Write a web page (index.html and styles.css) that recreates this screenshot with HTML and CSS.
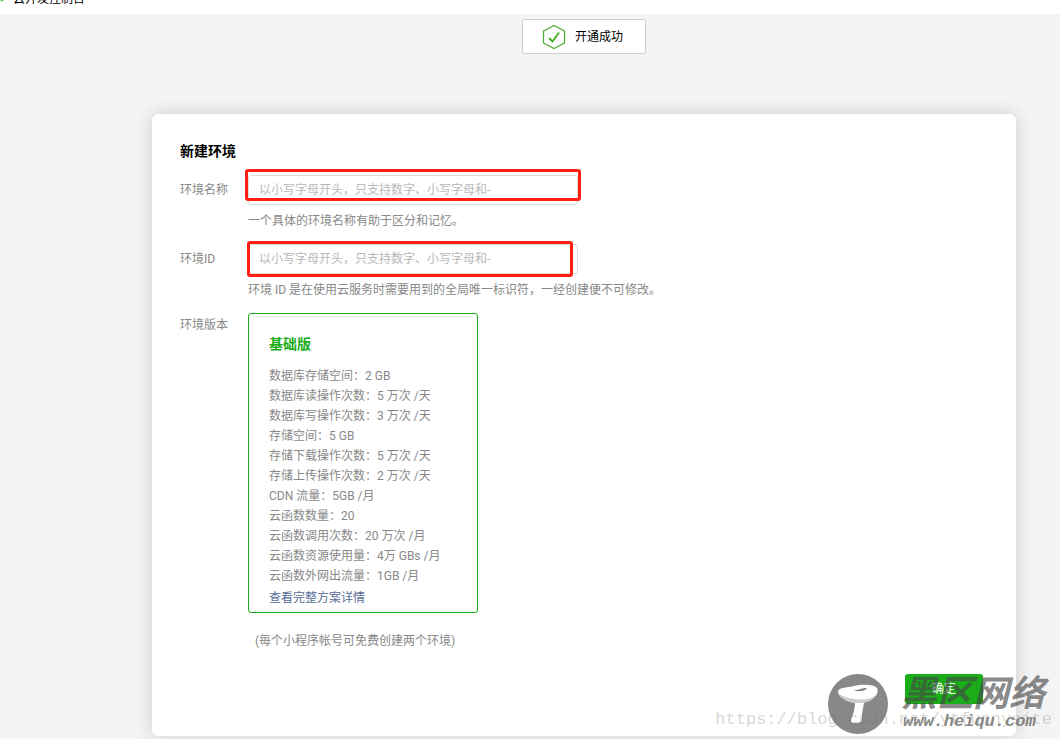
FILE: index.html
```
<!DOCTYPE html>
<html lang="zh-CN">
  <head>
    <meta charset="UTF-8" />
    <meta name="viewport" content="width=device-width, initial-scale=1.0" />
    <title>云开发控制台</title>
    <link rel="stylesheet" href="styles.css">
  </head>
  <body>
    <header class="topbar">
      <svg class="topbar-logo" width="5" height="12" viewBox="0 0 5 12">
        <path d="M1 4L4 2" stroke="#5fc45f" stroke-width="2" fill="none" />
      </svg>
      <span class="topbar-title">云开发控制台</span>
    </header>

    <main class="main">
      <div class="toast">
        <svg width="24" height="26" viewBox="0 0 24 26" fill="none" stroke="#4dab32">
          <path d="M12 1.5L22.5 7V19L12 24.5L1.5 19V7Z" stroke-width="1.3" stroke-linejoin="round" />
          <path d="M7 14L10.5 17.5L17 8.5" stroke-width="2" />
        </svg>
        <span>开通成功</span>
      </div>

      <form class="card">
        <h1 class="card-title">新建环境</h1>

        <div class="row">
          <label class="label" for="envName">环境名称</label>
          <div class="field">
            <input class="input" type="text" id="envName" placeholder="以小写字母开头，只支持数字、小写字母和-" />
            <span class="mark mark-name"></span>
            <p class="hint">一个具体的环境名称有助于区分和记忆。</p>
          </div>
        </div>

        <div class="row">
          <label class="label" for="envId">环境ID</label>
          <div class="field">
            <input class="input" type="text" id="envId" placeholder="以小写字母开头，只支持数字、小写字母和-" />
            <span class="mark mark-id"></span>
            <p class="hint">环境 ID 是在使用云服务时需要用到的全局唯一标识符，一经创建便不可修改。</p>
          </div>
        </div>

        <div class="row">
          <span class="label label-plan">环境版本</span>
          <div class="field">
            <section class="plan">
              <h2 class="plan-title">基础版</h2>
              <ul class="plan-list">
                <li>数据库存储空间：2 GB</li>
                <li>数据库读操作次数：5 万次 /天</li>
                <li>数据库写操作次数：3 万次 /天</li>
                <li>存储空间：5 GB</li>
                <li>存储下载操作次数：5 万次 /天</li>
                <li>存储上传操作次数：2 万次 /天</li>
                <li>CDN 流量：5GB /月</li>
                <li>云函数数量：20</li>
                <li>云函数调用次数：20 万次 /月</li>
                <li>云函数资源使用量：4万 GBs /月</li>
                <li>云函数外网出流量：1GB /月</li>
              </ul>
              <a class="plan-link" href="#">查看完整方案详情</a>
            </section>
            <p class="note">(每个小程序帐号可免费创建两个环境)</p>
          </div>
        </div>

        <div class="actions">
          <button class="btn" type="submit">确定</button>
        </div>
      </form>
    </main>

    <div class="site-mark">
      <svg width="60" height="60" viewBox="0 0 60 60">
        <circle cx="30" cy="30" r="30" fill="#888" />
        <path d="M27 26C27 34 26 38 24 43C22 48 23 49 28 49C33 49 34 47 34 42C34 37 36 33 36 26Z" fill="#fff" />
        <path d="M10 18C10 13 18 14 26 12C34 10 46 10 49 14C52 20 45 27 34 29C24 30 11 25 10 18Z" fill="#fff" />
        <path d="M11 20C18 25 39 29 48 21C44 28 36 29 30 29C22 29 14 26 11 20Z" fill="#ccc" />
        <path d="M25 16C30 17 32 14 39 14C37 18 29 18 25 16Z" fill="#888" />
      </svg>
      <div class="site-text">
        <div class="site-name">黑区网络</div>
        <div class="site-url">www.heiqu.com</div>
      </div>
    </div>
    <div class="blog-mark">https://blog.csdn.net/ytfunnysite</div>
  </body>
</html>
```
FILE: styles.css
```
* {
  box-sizing: border-box;
}

body {
  position: relative;
  margin: 0;
  background-color: #f4f4f4;
  color: #888;
  font-family: Roboto, "Noto Sans CJK SC", sans-serif;
  font-size: 12px;
  line-height: 20px;
}

h1,
h2,
p,
ul {
  margin: 0;
  padding: 0;
}

/* top bar, scrolled almost out of view */
.topbar {
  display: flex;
  align-items: flex-end;
  gap: 8px;
  height: 14px;
  padding-bottom: 5px;
  background: #fff;
  color: #000;
  overflow: hidden;
}

.main {
  padding: 5px 44px 3px 152px;
}

.toast {
  display: flex;
  align-items: center;
  gap: 9px;
  width: fit-content;
  height: 35px;
  margin: 0 auto 60px;
  padding: 0 22px 0 19px;
  border: 1px solid #d0d0d0;
  border-radius: 2px;
  background: #fff;
  color: #000;
}

.card {
  padding: 27px 33px 32px 28px;
  border-radius: 6px;
  background: #fff;
  box-shadow: 0 0 18px rgba(0, 0, 0, 0.16);
}

.card-title {
  margin-bottom: 14px;
  color: #000;
  font-size: 14px;
  line-height: 20px;
}

.row {
  display: flex;
  margin-bottom: 13px;
}

.label {
  width: 68px;
  flex-shrink: 0;
  line-height: 30px;
}

.label-plan {
  line-height: 24px;
}

.field {
  position: relative;
}

.input {
  display: block;
  width: 330px;
  height: 30px;
  padding: 0 10px;
  border: 1px solid #ddd;
  border-radius: 3px;
  outline: none;
  background: #fff;
  color: #333;
  font: inherit;
}

.input::placeholder {
  color: #b8b8b8;
}

.hint {
  margin-top: 6px;
}

/* red boxes drawn over the inputs */
.mark {
  position: absolute;
  border: 3px solid #ff1f12;
  border-radius: 3px;
  pointer-events: none;
}

.mark-name {
  top: -6px;
  left: -3px;
  width: 336px;
  height: 32px;
}

.mark-id {
  top: -3px;
  left: -1px;
  width: 326px;
  height: 36px;
}

.plan {
  width: 230px;
  padding: 20px 20px 4px;
  border: 1px solid #1aad19;
  border-radius: 3px;
}

.plan-title {
  margin-bottom: 12px;
  color: #1aad19;
  font-size: 14px;
  line-height: 20px;
}

.plan-list {
  margin-bottom: 2px;
  list-style: none;
}

.plan-link {
  display: block;
  color: #576b95;
  text-decoration: none;
}

.note {
  margin-top: 18px;
  padding-left: 7px;
}

.actions {
  display: flex;
  justify-content: flex-end;
  margin-top: 23px;
}

.btn {
  width: 78px;
  height: 30px;
  padding: 0;
  border: none;
  border-radius: 3px;
  background: #1aad19;
  color: #fff;
  font: inherit;
  cursor: pointer;
}

.btn:hover {
  opacity: 0.9;
}

/* watermarks */
.blog-mark {
  position: absolute;
  right: 8px;
  bottom: 9px;
  color: rgba(120, 120, 100, 0.3);
  font-family: "Liberation Mono", monospace;
  font-size: 17px;
  pointer-events: none;
}

.site-mark {
  position: absolute;
  right: 15px;
  bottom: 5px;
  display: flex;
  gap: 13px;
  color: rgba(70, 70, 70, 0.65);
  font-style: italic;
  font-weight: bold;
  pointer-events: none;
}

.site-name {
  font-size: 36px;
  line-height: 40px;
}

.site-url {
  padding-left: 2px;
  font-family: "Liberation Mono", monospace;
  font-size: 17px;
  line-height: 16px;
}
```
